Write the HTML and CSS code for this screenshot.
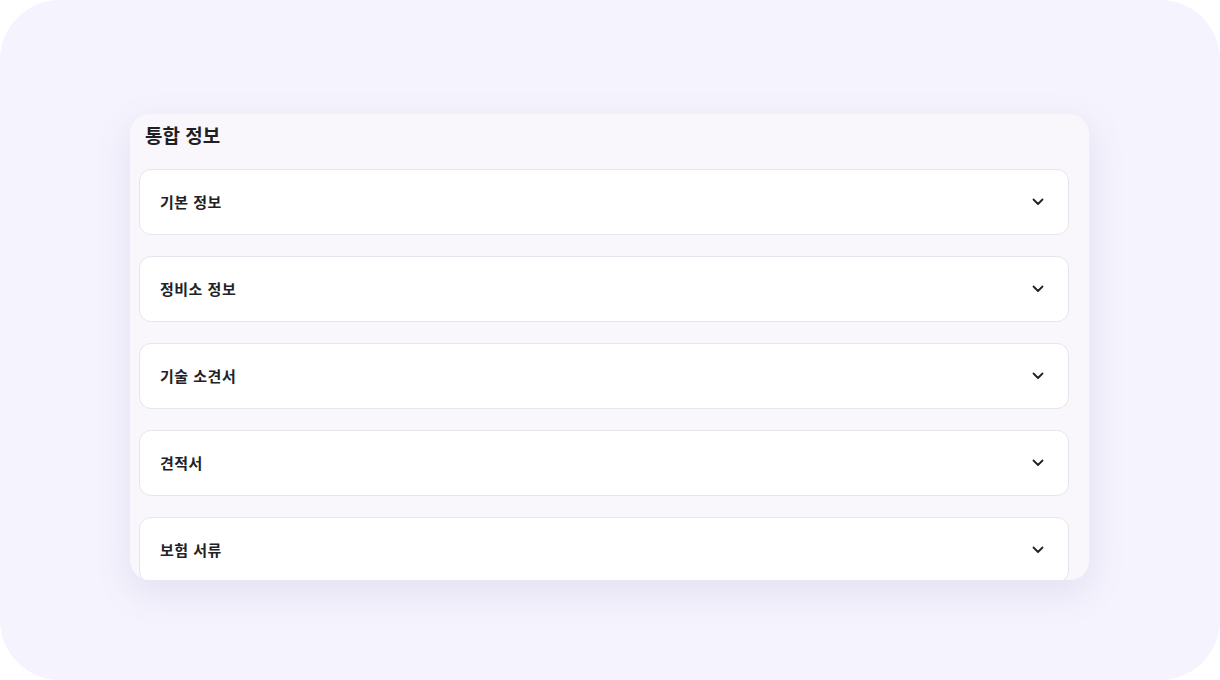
FILE: index.html
```html
<!DOCTYPE html>
<html lang="ko">
<head>
<meta charset="utf-8">
<link rel="stylesheet" href="styles.css">
</head>
<body>
<div class="frame">
  <div class="card">
    <div class="scroller">
      <h2 class="title">통합 정보</h2>
      <div class="list">
        <div class="acc"><span class="acc-label">기본 정보</span><svg class="chev" viewBox="0 0 12 8" width="12" height="8"><path d="M1.5 1.5 L6 6 L10.5 1.5" fill="none" stroke="#222" stroke-width="1.8" stroke-linecap="round" stroke-linejoin="round"/></svg></div>
        <div class="acc"><span class="acc-label">정비소 정보</span><svg class="chev" viewBox="0 0 12 8" width="12" height="8"><path d="M1.5 1.5 L6 6 L10.5 1.5" fill="none" stroke="#222" stroke-width="1.8" stroke-linecap="round" stroke-linejoin="round"/></svg></div>
        <div class="acc"><span class="acc-label">기술 소견서</span><svg class="chev" viewBox="0 0 12 8" width="12" height="8"><path d="M1.5 1.5 L6 6 L10.5 1.5" fill="none" stroke="#222" stroke-width="1.8" stroke-linecap="round" stroke-linejoin="round"/></svg></div>
        <div class="acc"><span class="acc-label">견적서</span><svg class="chev" viewBox="0 0 12 8" width="12" height="8"><path d="M1.5 1.5 L6 6 L10.5 1.5" fill="none" stroke="#222" stroke-width="1.8" stroke-linecap="round" stroke-linejoin="round"/></svg></div>
        <div class="acc"><span class="acc-label">보험 서류</span><svg class="chev" viewBox="0 0 12 8" width="12" height="8"><path d="M1.5 1.5 L6 6 L10.5 1.5" fill="none" stroke="#222" stroke-width="1.8" stroke-linecap="round" stroke-linejoin="round"/></svg></div>
      </div>
    </div>
  </div>
</div>
</body>
</html>
```
FILE: styles.css
```css
* { box-sizing: border-box; }
html, body {
  margin: 0;
  padding: 0;
  background: #ffffff;
  font-family: "Noto Sans CJK KR", "Noto Sans", sans-serif;
}
.frame {
  width: 1220px;
  height: 680px;
  border-radius: 60px;
  background: #f5f3fd;
  padding: 114px 130px 0 130px;
}
.card {
  width: 960px;
  height: 466px;
  border-radius: 20px;
  background: #f9f7fc;
  box-shadow: 0 12px 36px rgba(110, 100, 170, 0.13);
  overflow: hidden;
  border-right: 1px solid #f0eef5;
}
.scroller {
  padding: 9px 20px 0 9px;
}
.title {
  margin: 0 0 22px 6px;
  font-size: 19px;
  line-height: 24px;
  font-weight: 700;
  color: #1f1f24;
  letter-spacing: 0;
}
.list {
  display: flex;
  flex-direction: column;
  gap: 21px;
}
.acc {
  height: 66px;
  flex: none;
  background: #ffffff;
  border: 1px solid #e6e4ec;
  border-radius: 12px;
  padding: 0 24px 2px 20px;
  display: flex;
  align-items: center;
  justify-content: space-between;
}
.acc-label {
  font-size: 15px;
  font-weight: 700;
  color: #222226;
  letter-spacing: 0.5px;
}
.chev { display: block; margin-top: 1px; }
```
